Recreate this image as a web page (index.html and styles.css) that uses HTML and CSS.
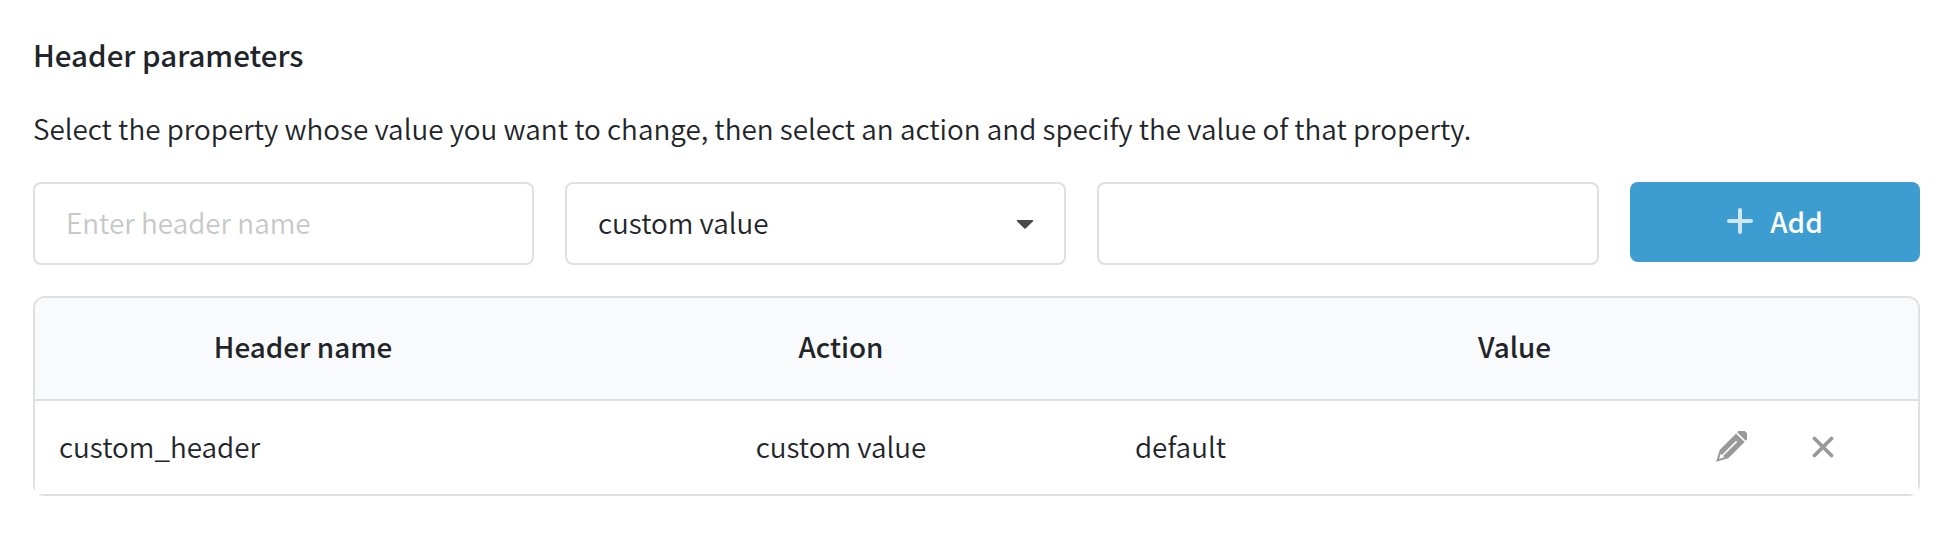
FILE: index.html
```html
<!DOCTYPE html>
<html lang="en">
<head>
<meta charset="utf-8">
<title>Header parameters</title>
<link rel="stylesheet" href="styles.css">
</head>
<body>
<main class="panel">
  <h2 class="title">Header parameters</h2>
  <p class="desc">Select the property whose value you want to change, then select an action and specify the value of that property.</p>
  <form class="controls">
    <input class="field" type="text" placeholder="Enter header name">
    <div class="field select">
      <span>custom value</span>
      <svg class="caret" width="18" height="10" viewBox="0 0 18 10"><path d="M1.5 1h15a.8.8 0 0 1 .6 1.3L9.6 9.4a.8.8 0 0 1-1.2 0L.9 2.3A.8.8 0 0 1 1.5 1z"/></svg>
    </div>
    <input class="field" type="text">
    <button class="add" type="button">
      <svg width="26" height="26" viewBox="0 0 26 26"><path d="M13 2v22M2 13h22" stroke="#cfe6f3" stroke-width="4" stroke-linecap="round" fill="none"/></svg>
      <span>Add</span>
    </button>
  </form>
  <div class="table">
    <div class="row head">
      <div>Header name</div>
      <div>Action</div>
      <div>Value</div>
    </div>
    <div class="row body">
      <div class="name">custom_header</div>
      <div class="action">custom value</div>
      <div class="value">
        <span>default</span>
        <div class="actions">
          <svg class="pencil" width="32" height="32" viewBox="0 0 32 32">
            <g transform="rotate(45 16 16)">
              <path fill="#999" d="M10 1.300v-2.800a3.500 3.500 0 0 1 3.500-3.500h5a3.500 3.500 0 0 1 3.500 3.500v2.800z"/>
              <path fill="#999" fill-rule="evenodd" d="M10 2.800h12v23L16 37l-6-11.200zM15.200 8v20h-1.800l2.600 4.800 2.600-4.800h-1.800V8z"/>
            </g>
          </svg>
          <svg class="close" width="22" height="22" viewBox="0 0 22 22"><path d="M2.500 2.500l17 17M19.500 2.500l-17 17" stroke="#999" stroke-width="3.800" stroke-linecap="round" fill="none"/></svg>
        </div>
      </div>
    </div>
  </div>
</main>
</body>
</html>
```

FILE: styles.css
```css
* { box-sizing: border-box; }
html, body { margin: 0; padding: 0; background: #fff; }
body {
  width: 1954px;
  height: 552px;
  overflow: hidden;
  font-family: "Noto Sans CJK JP", "Noto Sans", sans-serif;
  color: #212529;
  font-size: 27.85px;
}
.panel { padding: 34px 34px 0 33px; }
.title { margin: 0; font-size: 29.5px; font-weight: 500; line-height: 40px; }
.desc { margin: 34px 0 0; line-height: 40px; font-weight: 350; }
.controls {
  display: grid;
  grid-template-columns: 501px 501px 502px 290px;
  column-gap: 31px;
  margin-top: 34px;
  align-items: start;
}
.field {
  height: 83px;
  width: 100%;
  border: 2px solid #e0e0e0;
  border-radius: 8px;
  background: #fff;
  padding: 0 31px 3px;
  font: inherit;
  font-weight: 350;
  color: #212529;
  outline: none;
}
.field::placeholder { color: #c8c8c8; opacity: 1; }
.select { display: flex; align-items: center; justify-content: space-between; padding-right: 30px; }
.caret { fill: #4a4a4a; margin-top: 3px; }
.add {
  height: 80px;
  border: 0;
  border-radius: 8px;
  background: #3d9dd0;
  color: #fff;
  font: inherit;
  font-weight: 500;
  padding: 0 0 2px;
  display: flex;
  align-items: center;
  justify-content: center;
  gap: 17px;
}
.table {
  margin-top: 31px;
  border: 2px solid #e0e0e0;
  border-radius: 12px;
  height: 200px;
}
.row { display: grid; grid-template-columns: 536px 540px 1fr; align-items: center; padding-bottom: 5px; }
.head {
  height: 103px;
  background: #f9fafc;
  border-bottom: 2px solid #e0e0e0;
  border-radius: 10px 10px 0 0;
  font-weight: 500;
  text-align: center;
}
.body { height: 93px; font-weight: 350; background: #fff; padding-bottom: 4px; }
.name { padding-left: 24px; }
.action { text-align: center; }
.value { display: flex; align-items: center; justify-content: space-between; padding: 0 84px 0 24px; }
.actions { display: flex; align-items: center; gap: 65px; margin-top: 2px; }
```
